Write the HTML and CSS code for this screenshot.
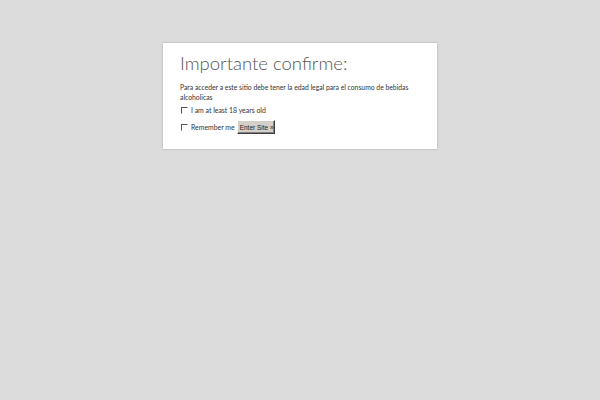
FILE: index.html
```html
<!DOCTYPE html>
<html>
<head>
<meta charset="utf-8">
<link rel="stylesheet" href="styles.css">
</head>
<body>
<div class="modal">
  <h1 class="title">Importante confirme:</h1>
  <p class="desc">Para acceder a este sitio debe tener la edad legal para el consumo de bebidas alcoholicas</p>
  <div class="row"><span class="cb"></span><span class="lbl">I am at least 18 years old</span></div>
  <div class="row"><span class="cb"></span><span class="lbl">Remember me</span><button class="btn">Enter Site »</button></div>
</div>
</body>
</html>
```
FILE: styles.css
```css
html, body { margin: 0; padding: 0; }
body { background: #dcdcdc; width: 600px; height: 400px; }
.modal {
  width: 274px; height: 106px; box-sizing: border-box;
  margin: 43px auto 0; background: #fff;
  box-shadow: 0 0 2px rgba(0,0,0,0.25);
  padding: 10px 17px 0 17px;
}
.title {
  margin: 0; font-family: "Lato", sans-serif; font-weight: 300;
  font-size: 18.5px; line-height: 20px; color: #555;
}
.desc {
  margin: 9px 0 0; font-family: "Lato", sans-serif; font-size: 6.8px;
  line-height: 10px; color: #333;
}
.row { display: flex; align-items: center; height: 16px; margin-top: 0; font-family: "Lato", sans-serif; font-size: 6.9px; color: #333; }
.row + .row { margin-top: 1px; }
.cb {
  width: 5px; height: 5px; margin: 0 4px 0 1px;
  border-top: 1px solid #555; border-left: 1px solid #555;
  border-right: 1px solid #fff; border-bottom: 1px solid #fff;
}
.lbl { margin-left: -1px; }
.btn {
  margin-left: 2px; height: 14px; padding: 0 2px; width: 38px;
  background: #d4d0c8; font-family: "Liberation Sans", sans-serif; font-size: 6.5px; color: #222;
  border: 1px solid; border-color: #fff #404040 #404040 #fff;
  box-shadow: inset -1px -1px 0 #808080;
  white-space: nowrap;
}
```
